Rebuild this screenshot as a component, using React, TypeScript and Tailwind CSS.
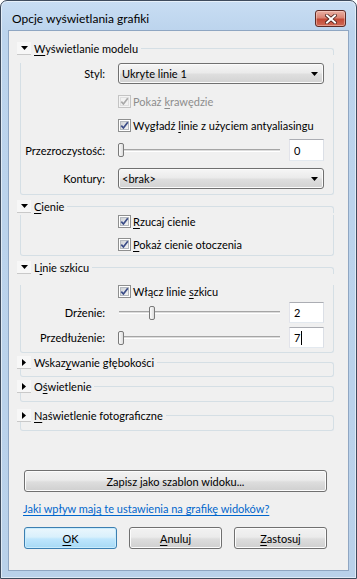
import type { ReactNode } from 'react'
import clsx from 'clsx'

// ── Small Win7-style controls ─────────────────────────────────────────────────

function Mn({ children }: { children: ReactNode }) {
  return <span className="underline underline-offset-[2px] decoration-[1px]">{children}</span>
}

function Toggle({ open }: { open: boolean }) {
  return (
    <div className="flex h-[13px] w-[14px] flex-none items-center justify-center border-b border-[#c9c9c9] bg-[#f7f7f7]">
      {open ? (
        <svg width="7" height="4" viewBox="0 0 7 4">
          <path d="M0 0h7L3.5 4z" fill="#000" />
        </svg>
      ) : (
        <svg width="4" height="7" viewBox="0 0 4 7">
          <path d="M0 0v7l4-3.5z" fill="#000" />
        </svg>
      )}
    </div>
  )
}

interface SectionProps {
  title: ReactNode
  open?: boolean
  className?: string
  bodyClassName?: string
  children?: ReactNode
}

function Section({ title, open = false, className, bodyClassName, children }: SectionProps) {
  return (
    <div className={clsx('ml-[8px] mr-[14px]', className)}>
      <div className="flex h-[13px]">
        <Toggle open={open} />
        <span className="ml-[3px] leading-[13px]">{title}</span>
        <div className="ml-[3px] mt-[6px] flex-1 rounded-tr-[3px] border-r border-t border-[#d5dfe5]" />
      </div>
      <div className={clsx('ml-[3px] rounded-b-[3px] border-x border-b border-[#d5dfe5]', bodyClassName)}>
        {children}
      </div>
    </div>
  )
}

function Checkbox({ checked, disabled }: { checked?: boolean; disabled?: boolean }) {
  return (
    <span
      className={clsx(
        'relative block h-[13px] w-[13px] flex-none border p-[1px]',
        disabled ? 'border-[#c4c4c4] bg-[#f4f4f4]' : 'border-[#8e8f8f] bg-white'
      )}
    >
      <span
        className={clsx(
          'block h-full w-full border',
          disabled
            ? 'border-[#e0e0e0] bg-[#f2f2f2]'
            : 'border-[#b4b9bf] bg-[linear-gradient(135deg,#cfd2d6,#f4f4f4)]'
        )}
      />
      {checked && (
        <svg className="absolute left-0 top-0" width="11" height="11" viewBox="0 0 11 11">
          <path
            d="M2.3 5.6 L4.4 8 L8.8 2.2"
            fill="none"
            stroke={disabled ? '#a9a9a9' : '#3b4d88'}
            strokeWidth="1.7"
          />
        </svg>
      )}
    </span>
  )
}

function CheckRow({ checked, disabled, children, className }: { checked?: boolean; disabled?: boolean; children: ReactNode; className?: string }) {
  return (
    <div className={clsx('flex h-[13px] items-center gap-[2px] pl-[97px]', className)}>
      <Checkbox checked={checked} disabled={disabled} />
      <span className={clsx('leading-[13px]', disabled && 'text-[#8d8d8d]')}>{children}</span>
    </div>
  )
}

function Row({ label, children, className }: { label: string; children: ReactNode; className?: string }) {
  return (
    <div className={clsx('grid grid-cols-[84px_1fr] items-center gap-[13px] pr-[9px]', className)}>
      <span className="text-right leading-[13px]">{label}</span>
      {children}
    </div>
  )
}

function Select({ value }: { value: string }) {
  return (
    <div className="flex h-full items-center justify-between rounded-[3px] border border-[#707070] bg-[linear-gradient(to_bottom,#f6f6f6_0%,#ebebeb_45%,#dedede_55%,#d2d2d2_100%)] pl-[3px] pr-[5px] shadow-[inset_0_0_0_1px_#fbfbfb]">
      <span className="leading-[13px]">{value}</span>
      <svg width="7" height="4" viewBox="0 0 7 4">
        <path d="M0 0h7L3.5 4z" fill="#000" />
      </svg>
    </div>
  )
}

function Slider({ pos, value, caret }: { pos: number; value: string; caret?: boolean }) {
  return (
    <div className="flex h-full items-center gap-[8px]">
      <div className="relative flex h-full flex-1 items-center pl-[1px] pr-[1px]">
        <div className="h-[3px] w-full border-b border-t border-b-white border-t-[#a5a5a5] bg-[#dcdcdc]" />
        <div
          className="absolute top-1/2 h-[14px] w-[6px] -translate-y-1/2 rounded-[2px] border border-[#7a7a7a] bg-[linear-gradient(to_right,#fdfdfd,#dcdcdc)]"
          style={{ left: pos }}
        />
      </div>
      <div className="flex h-full w-[35px] items-center border border-[#abadb3] border-b-[#e3e9ef] border-l-[#e2e3ea] border-r-[#dbdfe6] bg-white pl-[4px]">
        <span className="leading-[13px]">{value}</span>
        {caret && <span className="ml-[1px] h-[14px] w-[1px] bg-black" />}
      </div>
    </div>
  )
}

function Button({ children, primary, className }: { children: ReactNode; primary?: boolean; className?: string }) {
  return (
    <div
      className={clsx(
        'flex h-[22px] items-center justify-center rounded-[3px] border',
        primary
          ? 'border-[#3c7fb1] bg-[linear-gradient(to_bottom,#eaf6fd_0%,#d9f0fc_45%,#bee6fd_55%,#a7d9f5_100%)] shadow-[inset_0_0_0_1px_#c9ecfd]'
          : 'border-[#707070] bg-[linear-gradient(to_bottom,#f2f2f2_0%,#ebebeb_45%,#dddddd_55%,#cfcfcf_100%)] shadow-[inset_0_0_0_1px_#fcfcfc]',
        className
      )}
    >
      <span className="leading-[13px]">{children}</span>
    </div>
  )
}

// ── Dialog ────────────────────────────────────────────────────────────────────

export default function App() {
  return (
    <div className="flex h-[579px] w-[357px] flex-col rounded-t-[7px] border border-[#3e4b5d] bg-[linear-gradient(to_bottom,#c8ddf3_0%,#bcd4ed_30px,#b9d1ea_100%)] font-[Lato,sans-serif] text-[11px] text-black shadow-[inset_0_0_0_1px_rgba(255,255,255,0.55)]">
      {/* Title bar */}
      <div className="flex h-[29px] flex-none justify-between pl-[11px] pr-[10px]">
        <span className="mt-[10px] text-[12px] leading-[15px]">Opcje wyświetlania grafiki</span>
        <div className="mt-[9px] flex h-[17px] w-[31px] items-center justify-center rounded-[3px] border border-[#5e2b26] bg-[linear-gradient(to_bottom,#eab0a4_0%,#d98474_45%,#c34a37_55%,#cf6a56_100%)] shadow-[inset_0_0_0_1px_rgba(255,220,210,0.45)]">
          <svg width="12" height="10" viewBox="0 0 12 10">
            <path d="M2 1.5 L10 8.5 M10 1.5 L2 8.5" stroke="#4a1f1a" strokeWidth="3.6" strokeLinecap="square" />
            <path d="M2 1.5 L10 8.5 M10 1.5 L2 8.5" stroke="#fff" strokeWidth="2" strokeLinecap="square" />
          </svg>
        </div>
      </div>

      {/* Content */}
      <div className="mx-[7px] mb-[7px] flex flex-1 flex-col border border-[#8fa6c2] bg-[#f0f0f0]">
        <Section
          open
          className="mt-[11px]"
          bodyClassName="pb-[5px]"
          title={<><Mn>W</Mn>yświetlanie modelu</>}
        >
          <Row label="Styl:" className="mt-[8px] h-[21px]">
            <Select value="Ukryte linie 1" />
          </Row>
          <CheckRow disabled checked className="mt-[11px]">
            Pokaż <Mn>k</Mn>rawędzie
          </CheckRow>
          <CheckRow checked className="mt-[11px]">
            Wygładź <Mn>l</Mn>inie z użyciem antyaliasingu
          </CheckRow>
          <Row label="Przezroczystość:" className="mt-[7px] h-[22px]">
            <Slider pos={0} value="0" />
          </Row>
          <Row label="Kontury:" className="mt-[7px] h-[21px]">
            <Select value="<brak>" />
          </Row>
        </Section>

        <Section open className="mt-[5px]" bodyClassName="pb-[4px]" title={<><Mn>C</Mn>ienie</>}>
          <CheckRow checked className="mt-[2px]">
            <Mn>R</Mn>zucaj cienie
          </CheckRow>
          <CheckRow checked className="mt-[10px]">
            <Mn>P</Mn>okaż cienie otoczenia
          </CheckRow>
        </Section>

        <Section open className="mt-[5px]" bodyClassName="pb-[4px]" title={<>L<Mn>i</Mn>nie szkicu</>}>
          <CheckRow checked className="mt-[11px]">
            Włącz linie <Mn>s</Mn>zkicu
          </CheckRow>
          <Row label="Drżenie:" className="mt-[4px] h-[21px]">
            <Slider pos={31} value="2" />
          </Row>
          <Row label="Przedłużenie:" className="mt-[4px] h-[21px]">
            <Slider pos={0} value="7" caret />
          </Row>
        </Section>

        <Section className="mt-[3px]" bodyClassName="h-[8px]" title={<>Wskaz<Mn>y</Mn>wanie głębokości</>} />
        <Section className="mt-[3px]" bodyClassName="h-[9px]" title={<>O<Mn>ś</Mn>wietlenie</>} />
        <Section className="mt-[7px]" bodyClassName="h-[9px]" title={<><Mn>N</Mn>aświetlenie fotograficzne</>} />

        <div className="flex-1" />

        {/* Footer */}
        <div className="pb-[21px] pl-[15px] pr-[21px]">
          <Button>Zapisz jako szablon widoku...</Button>
          <div className="mt-[9px] -ml-[1px] leading-[15px] text-[#0066cc] underline underline-offset-[2px]">
            Jaki wpływ mają te ustawienia na grafikę widoków?
          </div>
          <div className="mt-[11px] grid grid-cols-3 gap-[12px]">
            <Button primary>
              <Mn>O</Mn>K
            </Button>
            <Button>
              <Mn>A</Mn>nuluj
            </Button>
            <Button>
              <Mn>Z</Mn>astosuj
            </Button>
          </div>
        </div>
      </div>
    </div>
  )
}
